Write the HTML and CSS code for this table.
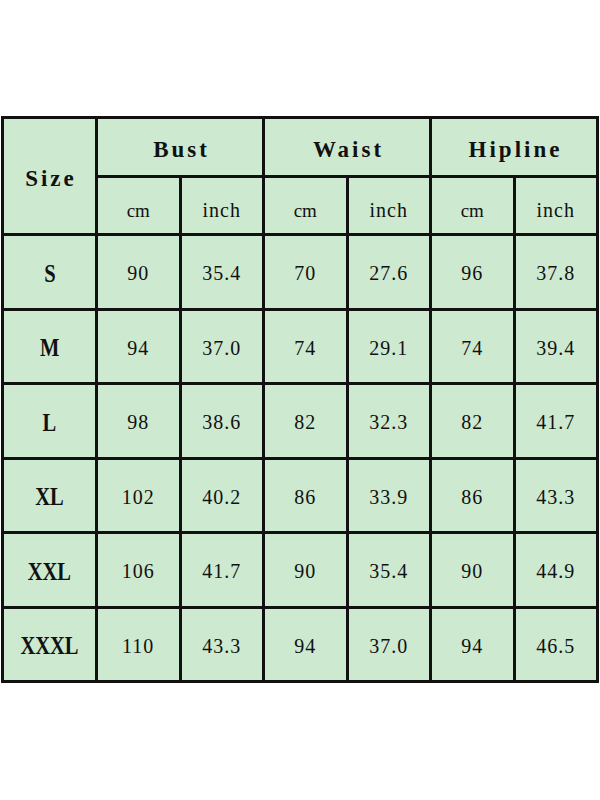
FILE: index.html
```html
<!DOCTYPE html>
<html>
<head>
<meta charset="utf-8">
<link rel="stylesheet" href="styles.css">
</head>
<body>
<div class="page">
<table class="sizes">
  <colgroup>
    <col class="c-size"><col class="c-num"><col class="c-num"><col class="c-num"><col class="c-num"><col class="c-num"><col class="c-num">
  </colgroup>
  <thead>
    <tr class="h1">
      <th rowspan="2" class="head">Size</th>
      <th colspan="2" class="head">Bust</th>
      <th colspan="2" class="head">Waist</th>
      <th colspan="2" class="head">Hipline</th>
    </tr>
    <tr class="h2">
      <th class="unit cm">cm</th><th class="unit">inch</th>
      <th class="unit cm">cm</th><th class="unit">inch</th>
      <th class="unit cm">cm</th><th class="unit">inch</th>
    </tr>
  </thead>
  <tbody>
    <tr><td class="lbl"><span>S</span></td><td>90</td><td>35.4</td><td>70</td><td>27.6</td><td>96</td><td>37.8</td></tr>
    <tr><td class="lbl"><span>M</span></td><td>94</td><td>37.0</td><td>74</td><td>29.1</td><td>74</td><td>39.4</td></tr>
    <tr><td class="lbl"><span>L</span></td><td>98</td><td>38.6</td><td>82</td><td>32.3</td><td>82</td><td>41.7</td></tr>
    <tr><td class="lbl"><span>XL</span></td><td>102</td><td>40.2</td><td>86</td><td>33.9</td><td>86</td><td>43.3</td></tr>
    <tr><td class="lbl"><span>XXL</span></td><td>106</td><td>41.7</td><td>90</td><td>35.4</td><td>90</td><td>44.9</td></tr>
    <tr><td class="lbl"><span>XXXL</span></td><td>110</td><td>43.3</td><td>94</td><td>37.0</td><td>94</td><td>46.5</td></tr>
  </tbody>
</table>
</div>
</body>
</html>
```

FILE: styles.css
```css
html, body {
  margin: 0;
  padding: 0;
  background: #ffffff;
}
.page {
  width: 600px;
  height: 800px;
  padding-top: 116px;
  padding-left: 1px;
  box-sizing: border-box;
}
.sizes {
  border-collapse: collapse;
  table-layout: fixed;
  width: 598px;
  background: #cde9d0;
  border: 3px solid #111;
  color: #111;
}
.c-size { width: 94px; }
.c-num { width: 83.5px; }
.sizes th, .sizes td {
  border: 3px solid #111;
  padding: 0;
  text-align: center;
  vertical-align: middle;
}
.h1 { height: 59px; }
.h2 { height: 58px; }
tbody tr { height: 74.5px; }
.sizes th.head {
  font-family: "Liberation Serif", serif;
  font-weight: bold;
  font-size: 23px;
  letter-spacing: 3px;
  padding-top: 6px;
  padding-left: 3px;
}
.unit, .sizes td {
  font-family: "Liberation Serif", serif;
  font-weight: normal;
  font-size: 20px;
  letter-spacing: 1px;
  padding-top: 4px;
}
.sizes th.unit {
  padding-top: 10px;
}
.sizes th.unit.cm {
  font-size: 19px;
  letter-spacing: 0;
}
.sizes td.lbl {
  font-weight: bold;
  font-size: 25px;
  letter-spacing: 0;
  padding-top: 4px;
}
.lbl span {
  display: inline-block;
  transform: scaleX(0.82);
}
```
